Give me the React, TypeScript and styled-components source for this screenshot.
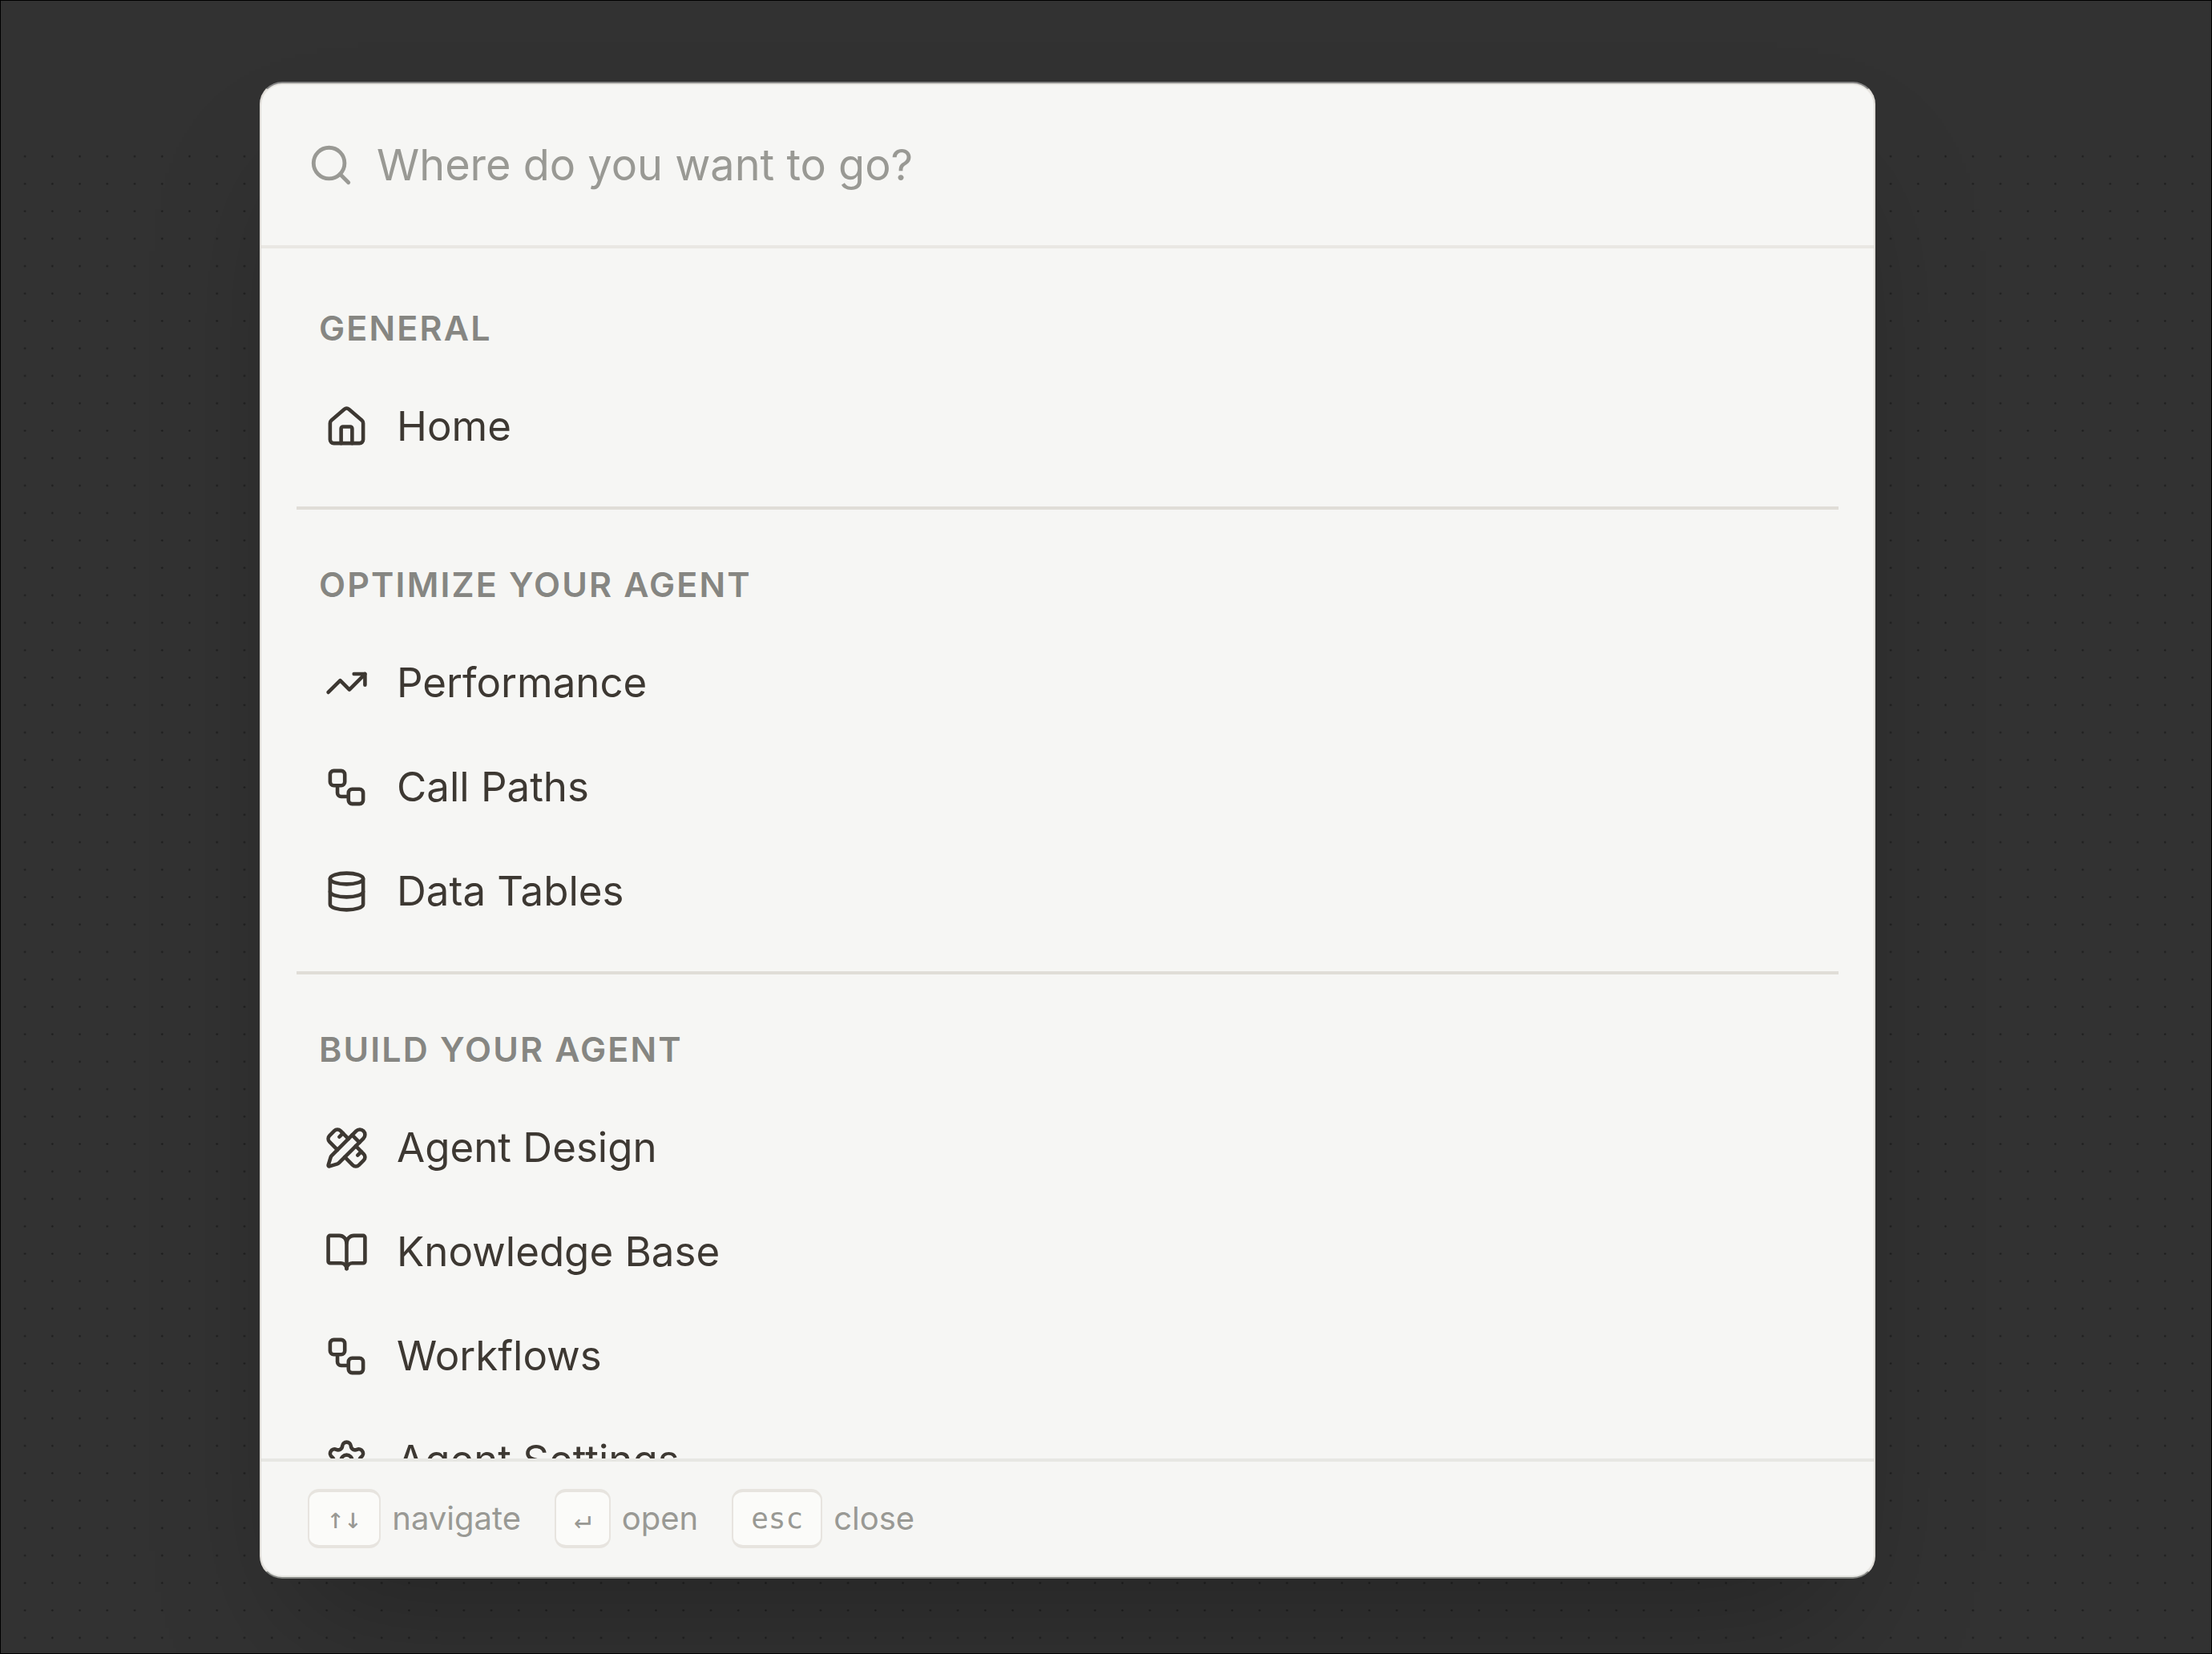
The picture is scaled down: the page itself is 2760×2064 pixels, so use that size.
import React from "react";
import styled, { createGlobalStyle } from "styled-components";
import {
  BookOpen,
  Database,
  House,
  PencilRuler,
  Search,
  Settings,
  TrendingUp,
  Workflow,
  type LucideIcon,
} from "lucide-react";

const sans = `Inter, "Liberation Sans", sans-serif`;
const mono = `"DejaVu Sans Mono", "Liberation Mono", monospace`;

const GlobalStyle = createGlobalStyle`
  *, *::before, *::after { box-sizing: border-box; }
  html, body { margin: 0; height: 100%; }
  #root { height: 100%; }
  body { background: #323232; font-family: ${sans}; overflow: hidden; }
`;

const Backdrop = styled.main`
  position: relative;
  display: flex;
  height: 100vh;
  border: 1px solid #000000;
  background: #323232;
  padding: 101px 419px 93px 323px;
`;

const DotGrid = styled.svg`
  position: absolute;
  inset: 178px 0 0 0;
  width: 100%;
  height: calc(100% - 178px);
`;

const Dialog = styled.section`
  position: relative;
  display: flex;
  flex: 1;
  flex-direction: column;
  min-width: 0;
  overflow: hidden;
  border: 2px solid #e0ddd8;
  border-top-color: #868686;
  border-bottom-color: #868884;
  border-radius: 28px;
  background: #f6f6f4;
  box-shadow:
    inset 0 2px 0 #e8e6e1,
    inset 0 -2px 0 #e8e8e4,
    0 88px 160px -44px rgba(0, 0, 0, 0.25);
`;

const SearchBar = styled.label`
  display: flex;
  flex: none;
  align-items: center;
  gap: 28px;
  height: 206px;
  padding: 2px 58px 0;
  border-bottom: 4px solid #e9e7e3;
  color: #999994;
`;

const SearchInput = styled.input`
  flex: 1;
  min-width: 0;
  padding: 0;
  border: 0;
  outline: 0;
  background: transparent;
  color: #3d3832;
  font: 400 54px/80px ${sans};
  &::placeholder {
    color: #999994;
    opacity: 1;
  }
`;

const Results = styled.nav`
  flex: 1;
  min-height: 0;
  overflow: hidden;
  padding: 6px 44px;
`;

const Group = styled.section`
  padding: 35px 0;
  & + & {
    border-top: 4px solid #e0ddd7;
  }
`;

const GroupTitle = styled.h2`
  margin: 0;
  padding: 30px 28px;
  color: #868682;
  font: 600 43px/56px ${sans};
  letter-spacing: 0.05em;
  text-transform: uppercase;
`;

const ItemList = styled.ul`
  margin: 0;
  padding: 0;
  list-style: none;
`;

const Item = styled.button`
  display: flex;
  align-items: center;
  gap: 35px;
  width: 100%;
  height: 130px;
  padding: 0 35px;
  border: 0;
  background: transparent;
  color: #3d3832;
  font: 400 51px/72px ${sans};
  text-align: left;
`;

const Footer = styled.footer`
  display: flex;
  flex: none;
  align-items: center;
  gap: 42px;
  height: 148px;
  padding: 0 58px 2px;
  border-top: 4px solid #e7e7e3;
`;

const Hint = styled.span`
  display: flex;
  align-items: center;
  gap: 14px;
  color: #999994;
  font: 400 40px/52px ${sans};
`;

const Key = styled.kbd`
  padding: 0 22px;
  border: solid #e7e4df;
  border-width: 4px 2px;
  border-radius: 14px;
  background: #fbfbf9;
  font: 400 36px/66px ${mono};
`;

type Entry = { label: string; icon: LucideIcon };

const groups: { title: string; items: Entry[] }[] = [
  { title: "General", items: [{ label: "Home", icon: House }] },
  {
    title: "Optimize your agent",
    items: [
      { label: "Performance", icon: TrendingUp },
      { label: "Call Paths", icon: Workflow },
      { label: "Data Tables", icon: Database },
    ],
  },
  {
    title: "Build your agent",
    items: [
      { label: "Agent Design", icon: PencilRuler },
      { label: "Knowledge Base", icon: BookOpen },
      { label: "Workflows", icon: Workflow },
      { label: "Agent Settings", icon: Settings },
    ],
  },
];

const hints = [
  { keys: "↑↓", action: "navigate" },
  { keys: "↵", action: "open" },
  { keys: "esc", action: "close" },
];

export default function App() {
  return (
    <>
      <GlobalStyle />
      <Backdrop>
        <DotGrid aria-hidden="true">
          <defs>
            <pattern id="dots" x="13" y="-1" width="34.235" height="34.235" patternUnits="userSpaceOnUse">
              <circle cx="17.1" cy="17.1" r="1.2" fill="#1c1c1c" />
            </pattern>
          </defs>
          <rect width="100%" height="100%" fill="url(#dots)" />
        </DotGrid>
        <Dialog role="dialog" aria-label="Command menu">
          <SearchBar>
            <Search size={58} strokeWidth={2} />
            <SearchInput type="text" aria-label="Search" placeholder="Where do you want to go?" />
          </SearchBar>
          <Results>
            {groups.map((group) => (
              <Group key={group.title}>
                <GroupTitle>{group.title}</GroupTitle>
                <ItemList>
                  {group.items.map(({ label, icon: Icon }) => (
                    <li key={label}>
                      <Item type="button">
                        <Icon size={55} strokeWidth={2} />
                        {label}
                      </Item>
                    </li>
                  ))}
                </ItemList>
              </Group>
            ))}
          </Results>
          <Footer>
            {hints.map((hint) => (
              <Hint key={hint.action}>
                <Key>{hint.keys}</Key>
                {hint.action}
              </Hint>
            ))}
          </Footer>
        </Dialog>
      </Backdrop>
    </>
  );
}
